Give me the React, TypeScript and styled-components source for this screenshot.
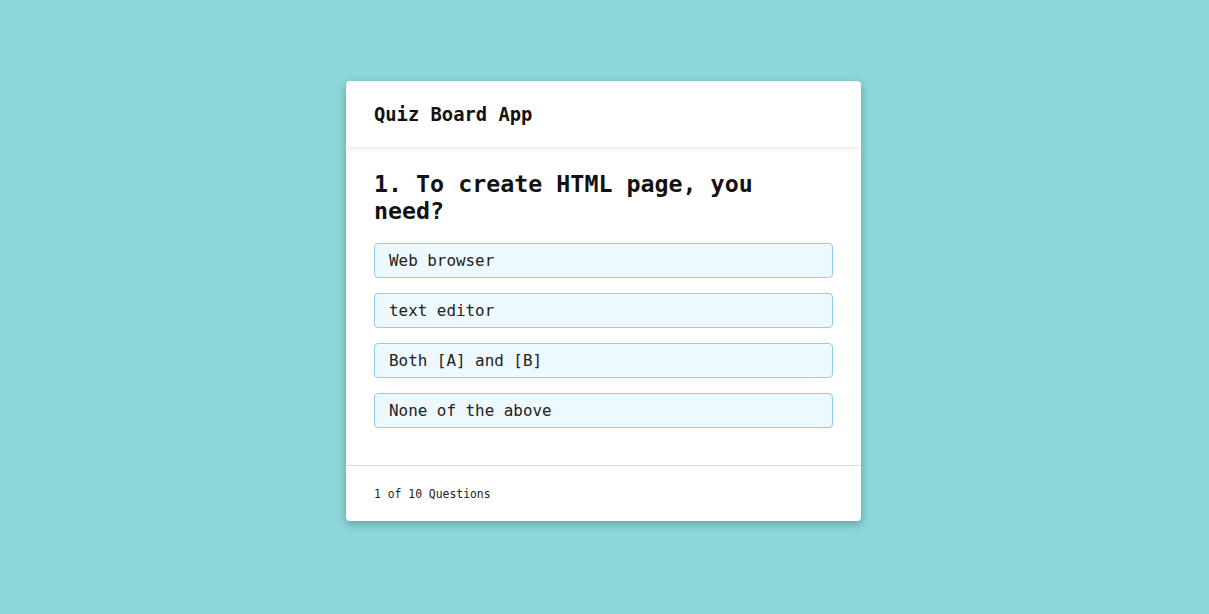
import React from "react";
import styled, { createGlobalStyle } from "styled-components";

const GlobalStyle = createGlobalStyle`
  html, body { margin: 0; padding: 0; }
  body {
    background: #8dd7da;
    font-family: "DejaVu Sans Mono", "Liberation Mono", monospace;
    color: #111;
  }
`;

const Page = styled.div`
  min-height: 614px;
  box-sizing: border-box;
  padding-bottom: 12px;
  padding-right: 2px;
  display: flex;
  align-items: center;
  justify-content: center;
`;

const Card = styled.div`
  width: 515px;
  background: #fff;
  border-radius: 4px;
  box-shadow: 0 3px 10px rgba(0, 0, 0, 0.28);
  overflow: hidden;
`;

const Header = styled.header`
  height: 66px;
  display: flex;
  align-items: center;
  padding: 0 28px;
  box-shadow: 0 2px 5px rgba(0, 0, 0, 0.08);
  position: relative;
`;

const Title = styled.h1`
  margin: 0;
  font-size: 18.8px;
  font-weight: bold;
`;

const Body = styled.main`
  padding: 23px 28px 37px;
`;

const Question = styled.h2`
  margin: 0 0 19px;
  font-size: 23.3px;
  line-height: 27px;
  font-weight: bold;
`;

const Options = styled.div`
  display: flex;
  flex-direction: column;
  gap: 15px;
`;

const Option = styled.button`
  display: block;
  width: 100%;
  height: 35px;
  box-sizing: border-box;
  text-align: left;
  padding: 0 14px;
  background: #eef8ff;
  border: 1px solid #93cbec;
  border-radius: 4px;
  font-family: inherit;
  font-size: 15.9px;
  color: #222;
  cursor: pointer;
`;

const Footer = styled.footer`
  border-top: 1px solid #dcdcdc;
  height: 55px;
  display: flex;
  align-items: center;
  padding: 0 28px;
  font-size: 11.4px;
  color: #222;
`;

const options = ["Web browser", "text editor", "Both [A] and [B]", "None of the above"];

export default function App() {
  return (
    <>
      <GlobalStyle />
      <Page>
        <Card>
          <Header>
            <Title>Quiz Board App</Title>
          </Header>
          <Body>
            <Question>1. To create HTML page, you need?</Question>
            <Options>
              {options.map((o) => (
                <Option key={o}>{o}</Option>
              ))}
            </Options>
          </Body>
          <Footer>1 of 10 Questions</Footer>
        </Card>
      </Page>
    </>
  );
}
